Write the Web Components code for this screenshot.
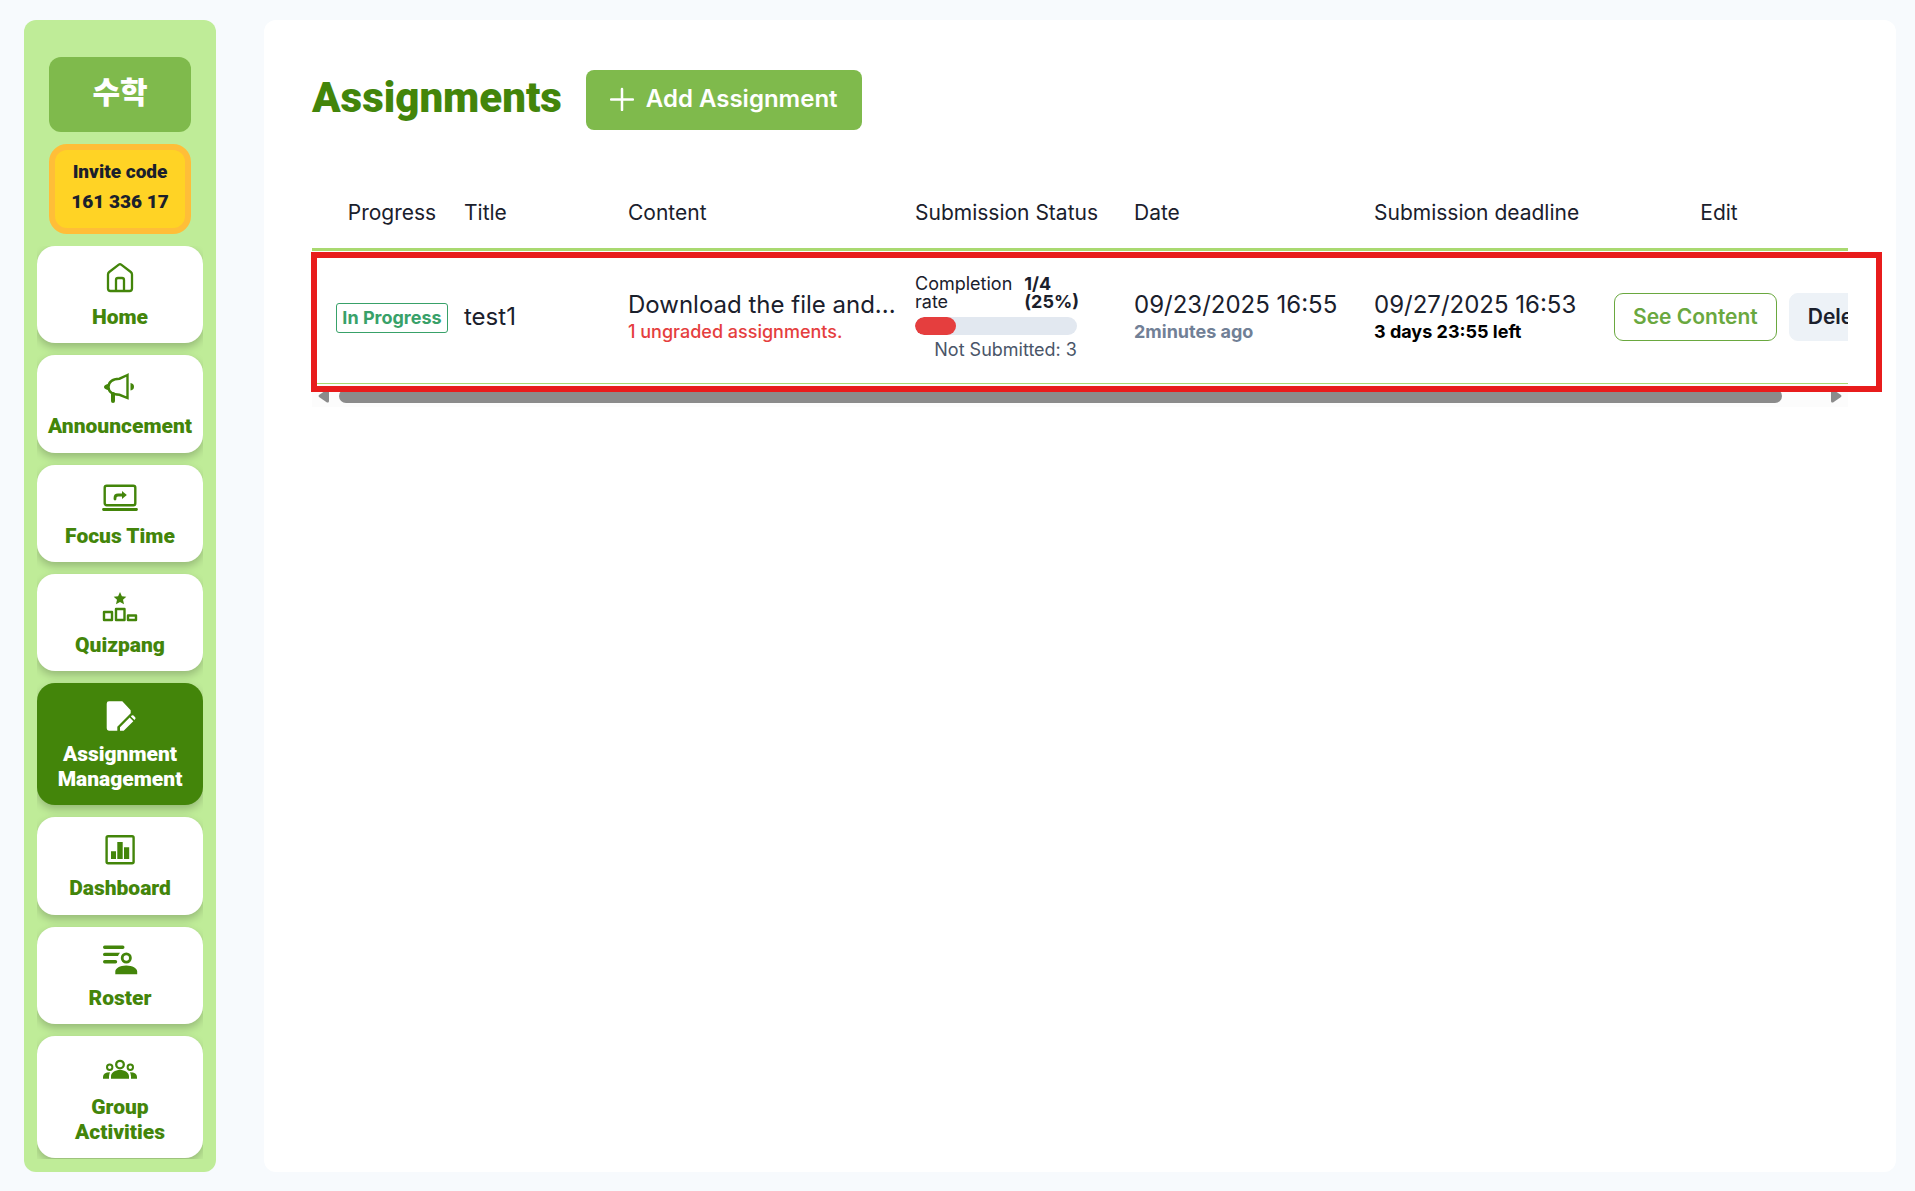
<!DOCTYPE html>
<html lang="en">
<head>
<meta charset="utf-8">
<title>Assignments</title>
<style>
  html, body { margin: 0; height: 100%; }
  body {
    --ink: #1a202c;
    --leaf: #43850a;
    --green: #7fba4c;
    --display: Roboto, "Noto Sans CJK KR", sans-serif;
    background: #f7fafd;
    color: var(--ink);
    font-family: Inter, "Noto Sans CJK KR", sans-serif;
  }
</style>
</head>
<body>
<class-app>
  <side-bar slot="side" heading="수학" code="161 336 17">
    <nav-item icon="home">Home</nav-item>
    <nav-item icon="horn">Announcement</nav-item>
    <nav-item icon="focus">Focus Time</nav-item>
    <nav-item icon="quiz">Quizpang</nav-item>
    <nav-item icon="assignment" active>Assignment Management</nav-item>
    <nav-item icon="dashboard">Dashboard</nav-item>
    <nav-item icon="roster">Roster</nav-item>
    <nav-item icon="group">Group Activities</nav-item>
  </side-bar>
  <page-header>Assignments</page-header>
  <assignment-table></assignment-table>
</class-app>

<script>
const define = (name, html, setup) => customElements.define(name, class extends HTMLElement {
  connectedCallback() {
    if (this.shadowRoot) return;
    const template = document.createElement('template');
    template.innerHTML = html;
    this.attachShadow({ mode: 'open' }).append(template.content.cloneNode(true));
    if (setup) setup(this, this.shadowRoot);
  }
});

const icons = {
  home: '<path fill="none" stroke="currentColor" stroke-width="2.300" stroke-linejoin="round" d="M6 15.5Q6 14 7.2 13L16.8 5.7Q18 4.8 19.200 5.700L28.800 13Q30 14 30 15.500V29.500Q30 32 27.500 32H8.500Q6 32 6 29.500ZM14 32V21Q14 19 16 19H20Q22 19 22 21V32"/>',
  horn: '<path fill="none" stroke="currentColor" stroke-width="2.400" d="M25.500 7 17.500 10.700C11 11 6.500 13.500 6.500 19S11 26.500 17.500 26.800L25.500 30Z"/><path fill="none" stroke="currentColor" stroke-width="4" stroke-linecap="round" d="M11 26V33"/><path fill="currentColor" d="M6 16V22Q2 21 2 19T6 16ZM28.500 15Q32 15.500 32 18.700T28.500 22.500Z"/>',
  focus: '<rect x="2.700" y="7.700" width="30.600" height="19.600" rx="2" fill="none" stroke="currentColor" stroke-width="2.400"/><path fill="none" stroke="currentColor" stroke-width="2.800" stroke-linecap="round" d="M1.500 31.500H34.500M13 21V20Q13 17 16 17H20.500"/><path fill="currentColor" d="M20 13 24.800 17 20 21Z"/>',
  quiz: '<path fill="currentColor" d="m18 5 1.900 4.200 4.400.5-3.300 3 1 4.500-4-2.300-4 2.300 1-4.500-3.300-3 4.400-.5Z"/><g fill="none" stroke="currentColor" stroke-width="2.400" stroke-linejoin="round"><rect x="2" y="25" width="8" height="8"/><rect x="14" y="22" width="8.500" height="11"/><rect x="26" y="28.500" width="8" height="4.500"/></g>',
  assignment: '<path fill="currentColor" d="M7 5.300H20.300L28.700 14.300V17.300L15.300 30.700V34.700H7Q4.700 34.700 4.700 32.300V7.700Q4.700 5.300 7 5.300ZM18 34.700V31.300L27.700 21.600 31.300 25.200 21.700 34.700ZM28.900 20.500 29.700 19.600Q30.600 18.800 31.500 19.600L33.200 21.300Q34 22.200 33.200 23.100L32.500 24Z"/>',
  dashboard: '<rect x="4.600" y="6.200" width="27" height="27" rx="1.500" fill="none" stroke="currentColor" stroke-width="2.400"/><path fill="currentColor" d="M9 21.300H14V29H9ZM15.300 12H20.700V29H15.300ZM22 17.300H27.200V29H22Z"/>',
  roster: '<path fill="none" stroke="currentColor" stroke-width="3.400" stroke-linecap="round" d="M2.700 7.300H20.800M2.700 21.700H13.500"/><path fill="currentColor" d="M2.700 12.700H18Q16.500 14.300 16 16.100H2.700Q1 16.100 1 14.400T2.700 12.700ZM13.300 34.300V31.500C13.300 28.500 18 25.600 24.200 25.600S35.200 28.500 35.200 31.500V34.300Z"/><circle cx="24.300" cy="18" r="4.100" fill="none" stroke="currentColor" stroke-width="2.800"/>',
  group: '<g fill="none" stroke="currentColor"><circle cx="18" cy="15.600" r="3.800" stroke-width="2.300"/><circle cx="7.700" cy="18.300" r="2.700" stroke-width="2"/><circle cx="28.300" cy="18.300" r="2.700" stroke-width="2"/></g><path fill="currentColor" d="M9 29.700V27.500C9 23.500 13 21 18 21S27 23.500 27 27.500V29.700ZM1 29.700V28Q1 23.500 8 23.300 7 25.500 7 27.500V29.700ZM35 29.700V28Q35 23.500 28 23.300 29 25.500 29 27.500V29.700Z"/>'
};

define('class-app', `
  <style>
    :host { display: flex; gap: 48px; min-height: 100vh; box-sizing: border-box; padding: 20px 19px 19px 24px; }
    main { flex: 1; min-width: 0; box-sizing: border-box; padding: 50px 48px; border-radius: 12px; background: #fff; }
  </style>
  <slot name="side"></slot>
  <main><slot></slot></main>`);

define('nav-item', `
  <style>
    :host { display: flex; flex: 1 0 auto; }
    a {
      flex: 1; box-sizing: border-box; display: flex; flex-direction: column; align-items: center; gap: 10px;
      padding: 13px 8px; border-radius: 18px; background: #fff; color: var(--leaf);
      box-shadow: 0 4px 8px rgba(0, 0, 0, .22);
      font: 900 21px/25px var(--display); text-align: center; text-decoration: none;
    }
    :host([active]) a { background: var(--leaf); color: #fff; }
    svg { width: 36px; height: 36px; }
  </style>
  <a href="#"><svg viewBox="0 0 36 36" aria-hidden="true"></svg><span><slot></slot></span></a>`,
  (host, root) => {
    root.querySelector('svg').innerHTML = icons[host.getAttribute('icon')];
    if (host.hasAttribute('active')) root.querySelector('a').setAttribute('aria-current', 'page');
  });

define('side-bar', `
  <style>
    :host {
      display: flex; flex-direction: column; gap: 12px; flex: none; width: 192px; box-sizing: border-box;
      padding: 37px 13px 13px; border-radius: 12px; background: #bfec98;
      font-family: var(--display); text-align: center;
    }
    .name { margin: 0 12px; padding: 20px 0 23px; border-radius: 12px; background: var(--green); color: #fff; font-size: 30px; line-height: 32px; font-weight: 900; }
    .invite {
      margin: 0 12px; padding: 7px 0 11px; border: 6px solid #ffbe38; border-radius: 18px; background: #ffd325;
      color: var(--ink); font: 900 19px/30px var(--display); cursor: pointer;
    }
    .invite span { display: block; }
    nav { flex: 1; display: flex; flex-direction: column; gap: 12px; padding-bottom: 1px; overflow: hidden; }
  </style>
  <div class="name"></div>
  <button class="invite" type="button"><span>Invite code</span><span class="code"></span></button>
  <nav><slot></slot></nav>`,
  (host, root) => {
    root.querySelector('.name').textContent = host.getAttribute('heading');
    root.querySelector('.code').textContent = host.getAttribute('code');
  });

define('page-header', `
  <style>
    :host { display: flex; align-items: center; gap: 24px; }
    h1 { margin: 0; padding-bottom: 4px; color: var(--leaf); font: 900 42px/56px var(--display); }
    button {
      display: flex; align-items: center; gap: 12px; height: 60px; padding: 0 24px 2px; border: 0; border-radius: 8px;
      background: var(--green); color: #fff; font: 600 24px/30px Inter, sans-serif; cursor: pointer;
    }
    svg { width: 24px; height: 24px; }
  </style>
  <h1><slot></slot></h1>
  <button type="button">
    <svg viewBox="0 0 24 24" aria-hidden="true"><path d="M12 2V23M1 12.500H23" stroke="currentColor" stroke-width="2.500" stroke-linecap="round"/></svg>
    Add Assignment
  </button>`);

define('status-badge', `
  <style>
    :host { display: inline-block; padding: 0 5px; border: 1px solid #38a169; border-radius: 3px; color: #38a169; font-size: 18px; line-height: 28px; font-weight: 700; white-space: nowrap; }
  </style>
  <slot></slot>`);

define('completion-meter', `
  <style>
    :host { display: flex; flex-direction: column; gap: 6px; width: 162px; font-size: 18px; line-height: 18px; white-space: normal; }
    .top { display: flex; justify-content: space-between; gap: 12px; }
    b { flex: none; width: 53px; }
    .bar { height: 18px; border-radius: 9px; background: #e2e8f0; overflow: hidden; }
    .fill { width: 25%; height: 100%; border-radius: 9px; background: #e53e3e; }
    .rest { color: #4a5568; text-align: right; }
  </style>
  <div class="top"><span>Completion rate</span><b>1/4 (25%)</b></div>
  <div class="bar"><div class="fill"></div></div>
  <div class="rest">Not Submitted: 3</div>`);

define('scroll-track', `
  <style>
    :host { display: flex; align-items: center; gap: 10px; height: 23px; padding: 0 6px; background: #fcfcfc; }
    svg { width: 11px; height: 14px; fill: #8b8b8b; }
    .track { flex: 1; padding-right: 39px; }
    .thumb { height: 14px; border-radius: 7px; background: #8b8b8b; }
  </style>
  <svg viewBox="0 0 11 14"><path d="M9 .5Q11 0 11 2V12Q11 14 9 13.500L1 8Q0 7 1 6Z"/></svg>
  <div class="track"><div class="thumb"></div></div>
  <svg viewBox="0 0 11 14"><path d="M2 .5Q0 0 0 2V12Q0 14 2 13.500L10 8Q11 7 10 6Z"/></svg>`);

define('assignment-table', `
  <style>
    :host { display: block; position: relative; margin-top: 45px; }
    .view { overflow: hidden; }
    table { width: 100%; table-layout: fixed; border-collapse: separate; border-spacing: 0; }
    th, td { box-sizing: border-box; padding: 0 12px; text-align: left; font-weight: 400; white-space: nowrap; }
    th { height: 76px; padding-top: 2px; border-bottom: 3px solid #a9d970; font-size: 21px; line-height: 30px; }
    td { height: 133px; border-bottom: 1px solid #a9d970; font-size: 24px; line-height: 28px; }
    th:first-child, td:first-child { padding-left: 20px; padding-right: 0; text-align: center; }
    th:last-child { padding-right: 24px; text-align: center; }
    .c1 { width: 140px; } .c2 { width: 164px; } .c4 { width: 219px; } .c5, .c6 { width: 240px; } .c7 { width: 246px; }
    small { display: block; font-size: 18px; line-height: 25px; }
    .warn { color: #e53e3e; font-weight: 500; }
    .ago { color: #718096; font-weight: 700; }
    .left { color: #000; font-weight: 700; }
    .actions { display: flex; gap: 12px; }
    button { flex: none; height: 48px; padding: 0 18px; border: 1px solid #6aa83f; border-radius: 9px; background: #fff; color: #6aa83f; font: 600 21px/30px Inter, sans-serif; cursor: pointer; }
    .delete { border-color: #edf2f7; background: #edf2f7; color: var(--ink); }
    .mark { position: absolute; inset: 77px -34px 15px -1px; border: 6px solid #e81c1c; pointer-events: none; }
  </style>
  <div class="view">
    <table>
      <colgroup><col class="c1"><col class="c2"><col class="c3"><col class="c4"><col class="c5"><col class="c6"><col class="c7"></colgroup>
      <thead><tr><th>Progress</th><th>Title</th><th>Content</th><th>Submission Status</th><th>Date</th><th>Submission deadline</th><th>Edit</th></tr></thead>
      <tbody><tr>
        <td><status-badge>In Progress</status-badge></td>
        <td>test1</td>
        <td>Download the file and...<small class="warn">1 ungraded assignments.</small></td>
        <td><completion-meter></completion-meter></td>
        <td>09/23/2025 16:55<small class="ago">2minutes ago</small></td>
        <td>09/27/2025 16:53<small class="left">3 days 23:55 left</small></td>
        <td><div class="actions"><button type="button">See Content</button><button type="button" class="delete">Delete</button></div></td>
      </tr></tbody>
    </table>
  </div>
  <scroll-track></scroll-track>
  <div class="mark"></div>`);
</script>
</body>
</html>
